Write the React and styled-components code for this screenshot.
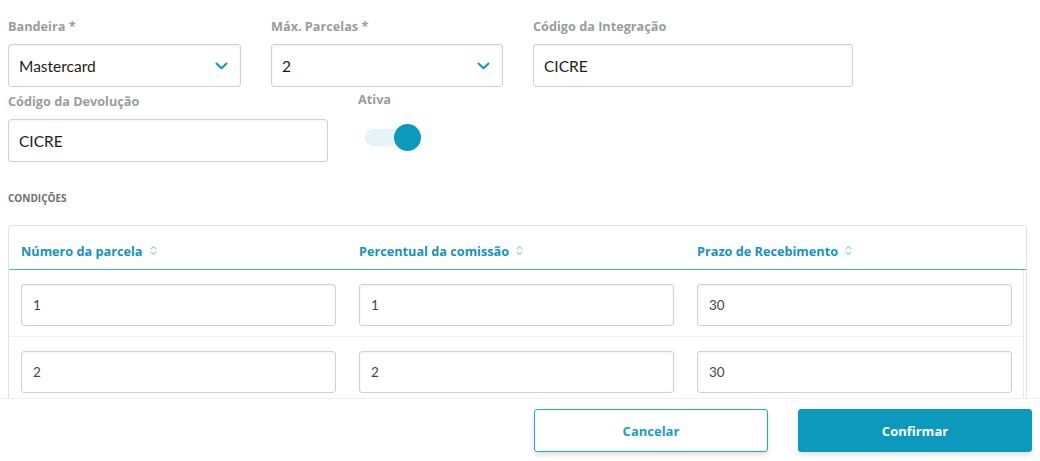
import styled, { createGlobalStyle } from "styled-components";

const primary = "#0b99bd";
const boldFont = `"Open Sans", "Lato", "Liberation Sans", sans-serif`;

const GlobalStyle = createGlobalStyle`
    * { box-sizing: border-box; }
    body {
        margin: 0;
        background: #ffffff;
        font-family: "Lato", "Open Sans", "Liberation Sans", sans-serif;
    }
`;

const rows = [
    { parcela: "1", comissao: "1", prazo: "30" },
    { parcela: "2", comissao: "2", prazo: "30" },
];

const Chevron = () => (
    <svg width="13" height="8" viewBox="0 0 13 8" fill="none">
        <path d="M1.5 1.5L6.5 6.2L11.5 1.5" stroke={primary} strokeWidth="2" strokeLinecap="round" strokeLinejoin="round" />
    </svg>
);

const SortIcon = () => (
    <svg width="7" height="11" viewBox="0 0 7 11" fill="none">
        <path d="M1 4L3.5 1.5L6 4M1 7L3.5 9.5L6 7" stroke="#9fd2e2" strokeWidth="1.1" strokeLinecap="round" strokeLinejoin="round" />
    </svg>
);

export default function App() {
    return (
        <SPage>
            <GlobalStyle />
            <SBody>
                <SRow>
                    <SField $width={233}>
                        <SLabel>Bandeira *</SLabel>
                        <SSelect>
                            <span>Mastercard</span>
                            <Chevron />
                        </SSelect>
                    </SField>
                    <SField $width={232}>
                        <SLabel>Máx. Parcelas *</SLabel>
                        <SSelect>
                            <span>2</span>
                            <Chevron />
                        </SSelect>
                    </SField>
                    <SField $width={320}>
                        <SLabel>Código da Integração</SLabel>
                        <SInput defaultValue="CICRE" />
                    </SField>
                </SRow>
                <SRow $top={6}>
                    <SField $width={320}>
                        <SLabel>Código da Devolução</SLabel>
                        <SInput defaultValue="CICRE" />
                    </SField>
                    <SField $width={120}>
                        <SLabel $up>Ativa</SLabel>
                        <SToggleBox>
                            <STrack>
                                <SKnob />
                            </STrack>
                        </SToggleBox>
                    </SField>
                </SRow>

                <SSection>CONDIÇÕES</SSection>

                <STable>
                    <SHead>
                        <SHeadCell>Número da parcela <SortIcon /></SHeadCell>
                        <SHeadCell>Percentual da comissão <SortIcon /></SHeadCell>
                        <SHeadCell>Prazo de Recebimento <SortIcon /></SHeadCell>
                    </SHead>
                    <STableBody>
                        {rows.map((r, i) => (
                            <STableRow key={i}>
                                <SCell><SCellInput defaultValue={r.parcela} /></SCell>
                                <SCell><SCellInput defaultValue={r.comissao} /></SCell>
                                <SCell><SCellInput defaultValue={r.prazo} /></SCell>
                            </STableRow>
                        ))}
                    </STableBody>
                </STable>
            </SBody>
            <SFooter>
                <SButton>Cancelar</SButton>
                <SButton $primary>Confirmar</SButton>
            </SFooter>
        </SPage>
    );
}

const SPage = styled.div`
    height: 461px;
    display: flex;
    flex-direction: column;
    overflow: hidden;
`;

const SBody = styled.div`
    flex: 1;
    overflow: hidden;
    padding: 18px 13px 0 8px;
`;

const SRow = styled.div`
    display: flex;
    gap: 30px;
    margin-top: ${(p) => p.$top || 0}px;
`;

const SField = styled.div`
    width: ${(p) => p.$width}px;
    display: flex;
    flex-direction: column;
`;

const SLabel = styled.label`
    font-family: ${boldFont};
    font-size: 12.7px;
    line-height: 16px;
    font-weight: 700;
    color: #9a9c9d;
    margin-bottom: 10px;
    margin-top: ${(p) => (p.$up ? "-2px" : "0")};
    padding-bottom: ${(p) => (p.$up ? "2px" : "0")};
    white-space: nowrap;
`;

const SSelect = styled.div`
    height: 43px;
    border: 1px solid #cdd3d5;
    border-radius: 3px;
    box-shadow: inset 0 1px 3px rgba(0, 0, 0, 0.06);
    display: flex;
    align-items: center;
    justify-content: space-between;
    padding: 0 12px 0 10px;
    font-size: 15.5px;
    color: #1c1c1c;
`;

const SInput = styled.input`
    height: 43px;
    width: 100%;
    border: 1px solid #cdd3d5;
    border-radius: 3px;
    box-shadow: inset 0 1px 3px rgba(0, 0, 0, 0.06);
    padding: 0 10px;
    font-family: inherit;
    font-size: 15.5px;
    color: #1c1c1c;
    outline: none;
`;

const SToggleBox = styled.div`
    height: 36px;
    display: flex;
    align-items: center;
    padding-left: 7px;
`;

const STrack = styled.div`
    position: relative;
    width: 50px;
    height: 17px;
    border-radius: 9px;
    background: #e4f3f8;
    box-shadow: 0 0 3px rgba(0, 0, 0, 0.05);
`;

const SKnob = styled.div`
    position: absolute;
    right: -6px;
    top: 50%;
    width: 27px;
    height: 27px;
    margin-top: -13.5px;
    border-radius: 50%;
    background: ${primary};
`;

const SSection = styled.div`
    margin-top: 30px;
    font-family: ${boldFont};
    font-size: 10px;
    line-height: 12px;
    font-weight: 700;
    color: #6d6f70;
`;

const STable = styled.div`
    margin-top: 21px;
    border: 1px solid #e1e4e5;
    border-radius: 3px;
`;

const SHead = styled.div`
    display: grid;
    grid-template-columns: repeat(3, 338px);
    height: 44px;
    border-bottom: 1px solid #45b3d5;
`;

const SHeadCell = styled.div`
    display: flex;
    align-items: flex-end;
    gap: 7px;
    padding: 0 12px 10px;
    font-family: ${boldFont};
    font-size: 12.7px;
    line-height: 16px;
    font-weight: 700;
    color: #1593b9;
    svg { margin-bottom: 3px; }
`;

const STableBody = styled.div`
    width: 1015px;
    border-right: 1px solid #e6e8e9;
`;

const STableRow = styled.div`
    display: grid;
    grid-template-columns: repeat(3, 338px);
    border-bottom: 1px solid #eceeef;
`;

const SCell = styled.div`
    padding: 14px 11px 10px 12px;
`;

const SCellInput = styled.input`
    width: 100%;
    height: 42px;
    border: 1px solid #cdd3d5;
    border-radius: 3px;
    box-shadow: inset 0 1px 3px rgba(0, 0, 0, 0.06);
    padding: 0 11px;
    font-family: inherit;
    font-size: 13.5px;
    color: #474747;
    outline: none;
`;

const SFooter = styled.div`
    height: 63px;
    flex-shrink: 0;
    border-top: 1px solid #eef0f0;
    display: flex;
    justify-content: flex-end;
    gap: 30px;
    padding: 10px 8px 0 0;
    background: #ffffff;
`;

const SButton = styled.button`
    width: 234px;
    height: 43px;
    border-radius: 3px;
    border: 1px solid ${(p) => (p.$primary ? primary : "#2aa5c9")};
    background: ${(p) => (p.$primary ? primary : "#ffffff")};
    color: ${(p) => (p.$primary ? "#ffffff" : "#1c9cc2")};
    font-family: ${boldFont};
    font-size: 13px;
    font-weight: 700;
    box-shadow: 0 3px 5px rgba(0, 0, 0, 0.12);
    cursor: pointer;
`;
